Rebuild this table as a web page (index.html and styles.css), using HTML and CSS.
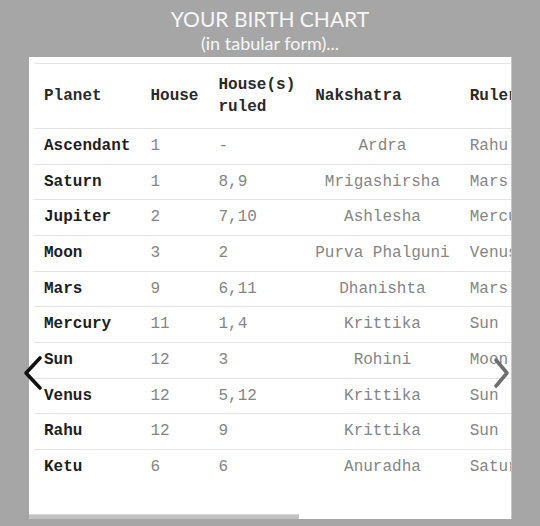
FILE: index.html
```html
<!DOCTYPE html>
<html lang="en">
<head>
<meta charset="utf-8">
<title>Your Birth Chart</title>
<link rel="stylesheet" href="styles.css">
</head>
<body>
<header class="heading">
  <h1 class="title">YOUR BIRTH CHART</h1>
  <p class="subtitle">(in tabular form)...</p>
</header>
<main class="carousel">
  <section class="panel">
    <div class="scroller">
      <table class="chart">
        <thead>
          <tr>
            <th>Planet</th>
            <th>House</th>
            <th>House(s)<br>ruled</th>
            <th>Nakshatra</th>
            <th>Ruler</th>
          </tr>
        </thead>
        <tbody>
          <tr><td>Ascendant</td><td>1</td><td>-</td><td class="nak">Ardra</td><td>Rahu</td></tr>
          <tr><td>Saturn</td><td>1</td><td>8,9</td><td class="nak">Mrigashirsha</td><td>Mars</td></tr>
          <tr><td>Jupiter</td><td>2</td><td>7,10</td><td class="nak">Ashlesha</td><td>Mercury</td></tr>
          <tr><td>Moon</td><td>3</td><td>2</td><td class="nak">Purva Phalguni</td><td>Venus</td></tr>
          <tr><td>Mars</td><td>9</td><td>6,11</td><td class="nak">Dhanishta</td><td>Mars</td></tr>
          <tr><td>Mercury</td><td>11</td><td>1,4</td><td class="nak">Krittika</td><td>Sun</td></tr>
          <tr><td>Sun</td><td>12</td><td>3</td><td class="nak">Rohini</td><td>Moon</td></tr>
          <tr><td>Venus</td><td>12</td><td>5,12</td><td class="nak">Krittika</td><td>Sun</td></tr>
          <tr><td>Rahu</td><td>12</td><td>9</td><td class="nak">Krittika</td><td>Sun</td></tr>
          <tr><td>Ketu</td><td>6</td><td>6</td><td class="nak">Anuradha</td><td>Saturn</td></tr>
        </tbody>
      </table>
    </div>
    <div class="scrollbar"><div class="thumb"></div></div>
  </section>
  <button class="nav prev" aria-label="Previous">
    <svg width="24" height="40" viewBox="0 0 24 40"><polyline points="18,4 4,19 18,34" fill="none" stroke="#111" stroke-width="3.6" stroke-linecap="round" stroke-linejoin="round"/></svg>
  </button>
  <button class="nav next" aria-label="Next">
    <svg width="24" height="40" viewBox="0 0 24 40"><polyline points="6,6 17,19 6,32" fill="none" stroke="#6e6e6e" stroke-width="3.6" stroke-linecap="round" stroke-linejoin="round"/></svg>
  </button>
</main>
</body>
</html>
```

FILE: styles.css
```css
html, body {
  margin: 0;
  padding: 0;
}
body {
  background: #a6a6a6;
  width: 540px;
  height: 526px;
  overflow: hidden;
}
.heading {
  text-align: center;
  color: #f7f7f7;
  font-family: Lato, "Open Sans", sans-serif;
  padding-top: 6px;
  height: 51px;
}
.title {
  margin: 0;
  font-size: 21px;
  font-weight: 400;
  line-height: 25px;
}
.subtitle {
  margin: 0;
  padding-top: 2px;
  font-size: 18px;
  font-weight: 400;
  line-height: 20px;
}
.carousel {
  position: relative;
  padding: 0 28px 0 29px;
}
.panel {
  background: #fff;
  height: 462px;
  display: flex;
  flex-direction: column;
  border-right: 1px solid #c8c8c8;
}
.scroller {
  flex: 1;
  overflow: hidden;
  padding: 6px 0 0 5px;
}
.chart {
  border-collapse: collapse;
  font-family: "Liberation Mono", "Courier New", monospace;
  font-size: 16px;
  color: #858585;
}
.chart th {
  text-align: left;
  vertical-align: middle;
  font-weight: bold;
  color: #2a2a2a;
  line-height: 22px;
  padding: 10px 10px 10px 10px;
  border-top: 1px solid #e3e3e3;
  white-space: nowrap;
}
.chart td {
  line-height: 20.67px;
  padding: 7px 10px;
  border-top: 1px solid #e3e3e3;
  white-space: nowrap;
}
.chart td:first-child {
  font-weight: bold;
  color: #1e1e1e;
}
.chart td.nak {
  text-align: center;
}
.scrollbar {
  height: 5px;
  background: #fff;
}
.thumb {
  width: 270px;
  height: 5px;
  background: #c3c3c3;
  box-shadow: inset 0 1px 0 #d6d6d6;
}
.nav {
  position: absolute;
  top: 297px;
  width: 24px;
  height: 40px;
  padding: 0;
  border: 0;
  background: none;
}
.nav svg {
  display: block;
}
.prev {
  left: 22px;
}
.next {
  left: 490px;
}
```
